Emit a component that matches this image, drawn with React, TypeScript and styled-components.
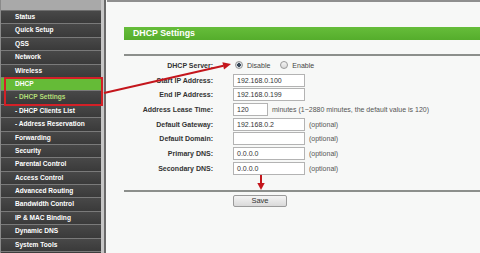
import React from 'react';
import styled, { createGlobalStyle } from 'styled-components';

const GlobalStyle = createGlobalStyle`
  html, body {
    margin: 0;
    padding: 0;
    background: #f7f8f7;
    font-family: 'Liberation Sans', Arial, sans-serif;
  }
`;

const Page = styled.div`
  position: relative;
  display: flex;
  width: 480px;
  height: 253px;
  overflow: hidden;
`;

const Sidebar = styled.nav`
  width: 101px;
  flex-shrink: 0;
  display: flex;
  flex-direction: column;
  background: #3d3d3d;
  border-left: 1px solid #8a8a8a;
  box-sizing: border-box;
`;

const SidebarTop = styled.div`
  height: 11px;
  background: #a9a9a9;
  border-bottom: 1px solid #6e6e6e;
  box-sizing: border-box;
`;

const MenuItem = styled.div<{ $active?: boolean; $current?: boolean }>`
  height: 13.4px;
  box-sizing: border-box;
  padding-left: 14px;
  border-bottom: 1px solid #7a7a7a;
  background: ${({ $active }) => ($active ? '#65bb37' : 'linear-gradient(#484848, #3a3a3a)')};
  color: ${({ $current }) => ($current ? '#b3de78' : '#fff')};
  font-size: 6.6px;
  font-weight: bold;
  line-height: 12.4px;
  white-space: nowrap;
`;

const Highlight = styled.div`
  position: relative;

  &::after {
    content: '';
    position: absolute;
    left: 3px;
    right: -2px;
    top: -1px;
    bottom: -1px;
    border: 2px solid #d32027;
    pointer-events: none;
  }
`;

const Divider = styled.div`
  width: 6px;
  flex-shrink: 0;
  display: flex;
`;

const DividerLight = styled.div`
  width: 3px;
  background: #c6c6c6;
`;

const DividerDark = styled.div`
  width: 2px;
  background: #6a6a6a;
`;

const Content = styled.main`
  flex: 1;
  border-top: 2px solid #8f8f8f;
  background: #f7f8f7;
  padding: 25px 0 0 17px;
  color: #333;
`;

const TitleBar = styled.div`
  height: 13px;
  background: linear-gradient(#66bd3a, #55ad2c);
  color: #fff;
  font-size: 8.8px;
  font-weight: bold;
  line-height: 13px;
  padding-left: 9px;
`;

const Rule = styled.div<{ $top: number }>`
  height: 2px;
  margin-top: ${({ $top }) => $top}px;
  background: #8c8f8c;
`;

const Form = styled.div`
  display: grid;
  grid-template-columns: 89px 1fr;
  grid-auto-rows: 14.7px;
  column-gap: 20px;
  margin-top: 2px;
`;

const Label = styled.div`
  font-size: 7px;
  font-weight: bold;
  color: #333;
  display: flex;
  align-items: center;
  justify-content: flex-end;
  white-space: nowrap;
`;

const Field = styled.div`
  display: flex;
  align-items: center;
  font-size: 7px;
  color: #444;
  white-space: nowrap;
`;

const Input = styled.div<{ $w: number }>`
  width: ${({ $w }) => $w}px;
  height: 13px;
  box-sizing: border-box;
  border: 1px solid #b3b3b3;
  background: #fff;
  font-size: 7px;
  line-height: 11px;
  padding-left: 3px;
  color: #333;
`;

const Note = styled.span`
  margin-left: 4px;
  color: #555;
`;

const Radio = styled.span<{ $checked?: boolean }>`
  width: 6px;
  height: 6px;
  border-radius: 50%;
  border: 1px solid #999;
  background: ${({ $checked }) =>
    $checked ? 'radial-gradient(circle, #3a4a5a 0 1.6px, #d6dbe0 2px)' : 'linear-gradient(#f5f5f5, #d8d8d8)'};
  margin: 0 4px 0 2px;
`;

const RadioText = styled.span`
  margin-right: 8px;
  font-size: 7px;
  color: #444;
`;

const SaveButton = styled.button`
  display: block;
  margin: 3px 0 0 109px;
  width: 54px;
  height: 12px;
  padding: 0;
  border: 1px solid #9a9a9a;
  border-radius: 2px;
  background: linear-gradient(#f4f4f4, #d9d9d9);
  font-family: 'Liberation Sans', Arial, sans-serif;
  font-size: 7.5px;
  color: #333;
  line-height: 10px;
`;

const Annotation = styled.svg`
  position: absolute;
  left: 0;
  top: 0;
  pointer-events: none;
`;

const menuBefore = ['Status', 'Quick Setup', 'QSS', 'Network', 'Wireless'];
const menuAfter = [
  '- DHCP Clients List',
  '- Address Reservation',
  'Forwarding',
  'Security',
  'Parental Control',
  'Access Control',
  'Advanced Routing',
  'Bandwidth Control',
  'IP & MAC Binding',
  'Dynamic DNS',
  'System Tools',
];

const fields = [
  { label: 'Start IP Address:', value: '192.168.0.100', width: 72 },
  { label: 'End IP Address:', value: '192.168.0.199', width: 72 },
  {
    label: 'Address Lease Time:',
    value: '120',
    width: 35,
    note: 'minutes (1~2880 minutes, the default value is 120)',
  },
  { label: 'Default Gateway:', value: '192.168.0.2', width: 72, note: '(optional)' },
  { label: 'Default Domain:', value: '', width: 72, note: '(optional)' },
  { label: 'Primary DNS:', value: '0.0.0.0', width: 72, note: '(optional)' },
  { label: 'Secondary DNS:', value: '0.0.0.0', width: 72, note: '(optional)' },
];

const App: React.FC = () => (
  <>
    <GlobalStyle />
    <Page>
      <Sidebar>
        <SidebarTop />
        {menuBefore.map(item => (
          <MenuItem key={item}>{item}</MenuItem>
        ))}
        <Highlight>
          <MenuItem $active>DHCP</MenuItem>
          <MenuItem $current>- DHCP Settings</MenuItem>
        </Highlight>
        {menuAfter.map(item => (
          <MenuItem key={item}>{item}</MenuItem>
        ))}
      </Sidebar>
      <Divider>
        <DividerLight />
        <DividerDark />
      </Divider>
      <Content>
        <TitleBar>DHCP Settings</TitleBar>
        <Rule $top={14} />
        <Form>
          <Label>DHCP Server:</Label>
          <Field>
            <Radio $checked />
            <RadioText>Disable</RadioText>
            <Radio />
            <RadioText>Enable</RadioText>
          </Field>
          {fields.map(f => (
            <React.Fragment key={f.label}>
              <Label>{f.label}</Label>
              <Field>
                <Input $w={f.width}>{f.value}</Input>
                {f.note && <Note>{f.note}</Note>}
              </Field>
            </React.Fragment>
          ))}
        </Form>
        <Rule $top={14} />
        <SaveButton>Save</SaveButton>
      </Content>
      <Annotation width="480" height="253" viewBox="0 0 480 253">
        <line x1="104" y1="93" x2="223.5" y2="65.8" stroke="#c4161c" strokeWidth="2" />
        <polygon points="231,64 224,69.4 222.4,62.2" fill="#c4161c" />
        <line x1="261" y1="175" x2="261" y2="184" stroke="#c4161c" strokeWidth="2" />
        <polygon points="257.3,183 264.7,183 261,190" fill="#c4161c" />
      </Annotation>
    </Page>
  </>
);

export default App;
